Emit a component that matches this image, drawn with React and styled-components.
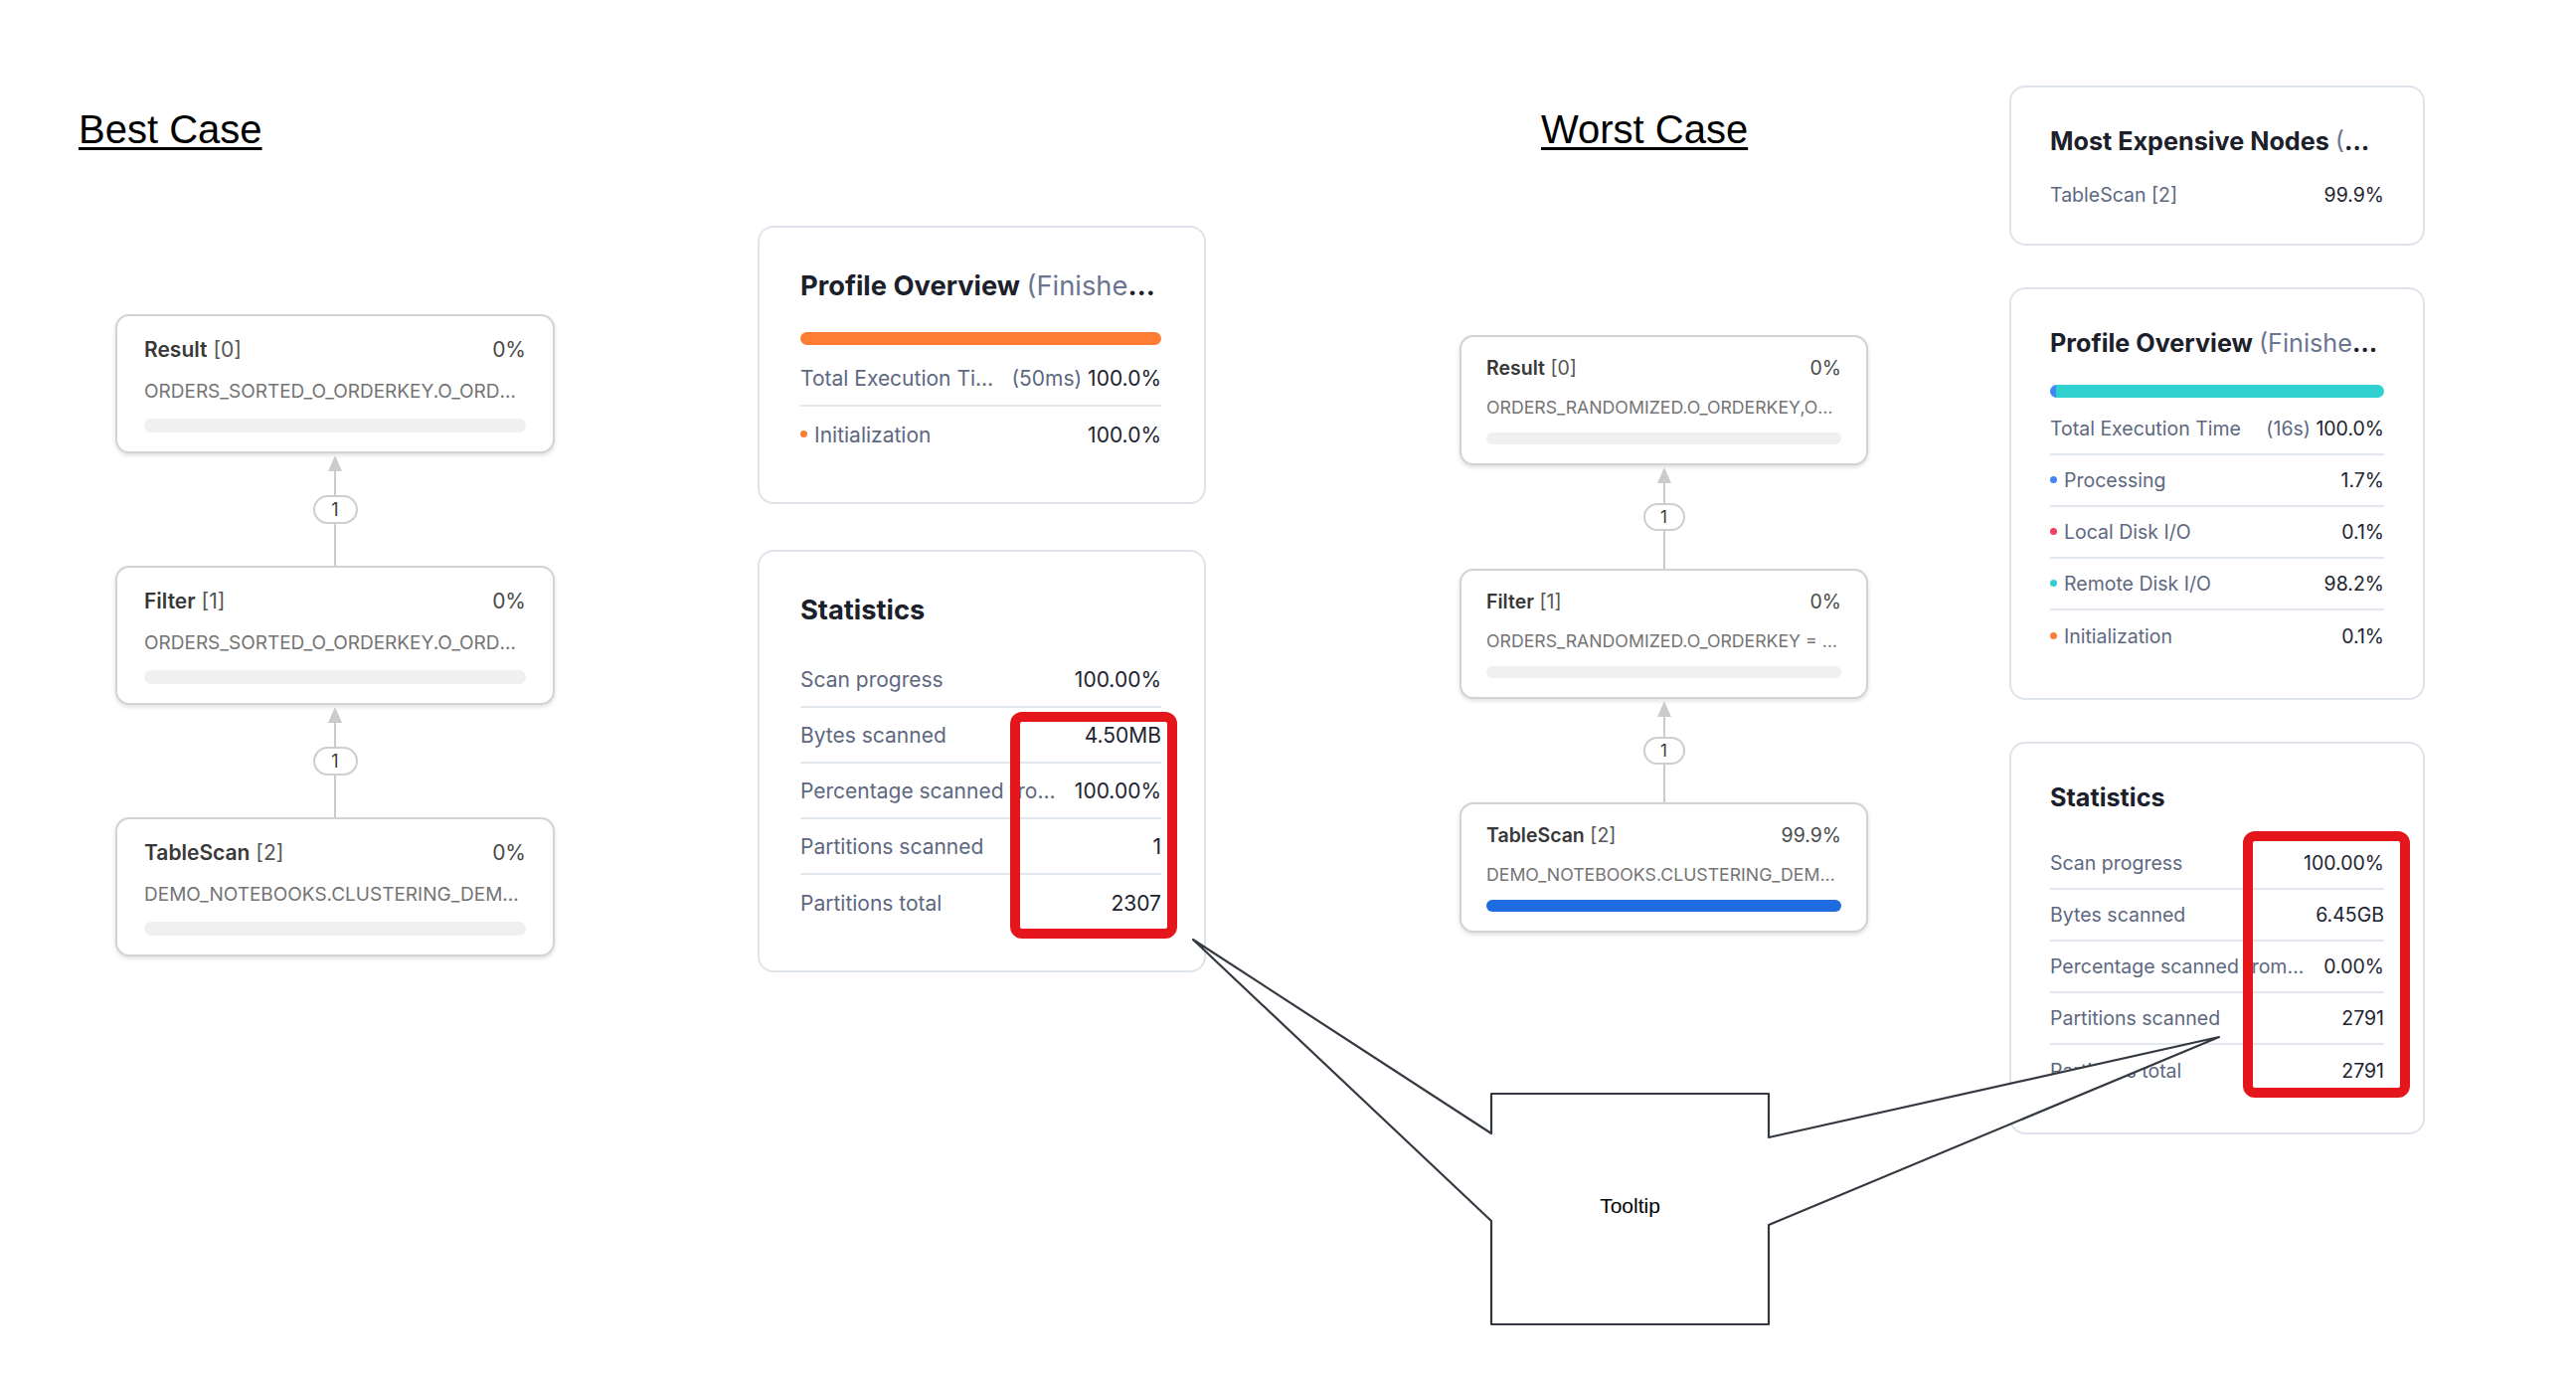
import React from 'react';
import styled, { createGlobalStyle } from 'styled-components';

const GlobalStyle = createGlobalStyle`
  html, body {
    margin: 0;
    padding: 0;
    background: #fff;
  }
  body {
    font-family: Inter, "Noto Sans", sans-serif;
  }
`;

const nodeSizes = {
  lg: { w: 442, padT: 18, padX: 27, padB: 19, head: 30, font: 21, sub: 19, subLine: 26, subGap: 15, bar: 14, barGap: 14, gap: 113, pillW: 45, pillH: 29, pillFont: 18 },
  sm: { w: 411, padT: 17, padX: 25, padB: 19, head: 28, font: 19.5, sub: 17.7, subLine: 24, subGap: 14, bar: 12, barGap: 13, gap: 104, pillW: 42, pillH: 28, pillFont: 17 },
};

const panelSizes = {
  lg: { w: 451, padT: 41, padL: 41, padR: 43, padB: 40, title: 27.3, titleLine: 36, row: 56, font: 21, barGap: 28, colGap: 46 },
  sm: { w: 418, padT: 37, padL: 39, padR: 39, padB: 36, title: 25.2, titleLine: 34, row: 52, font: 19.5, barGap: 25, colGap: 42 },
};

const Page = styled.div`
  position: relative;
  display: flex;
  align-items: flex-start;
  width: 2591px;
  height: 1392px;
  overflow: hidden;
  background: #fff;
`;

const DiagramColumn = styled.div`
  display: flex;
  flex-direction: column;
  flex-shrink: 0;
  margin-left: ${p => p.$offset}px;
  padding-top: 107px;
`;

const CaseTitle = styled.h1`
  margin: 0 0 0 ${p => p.$indent}px;
  font-family: "Liberation Sans", Arial, sans-serif;
  font-size: 40px;
  line-height: 46px;
  font-weight: 400;
  color: #000;
  text-decoration: underline;
  text-decoration-thickness: 3px;
  text-underline-offset: 4px;
`;

const Diagram = styled.div`
  display: flex;
  flex-direction: column;
  width: ${p => p.$s.w}px;
  margin-top: ${p => p.$top}px;
  margin-left: ${p => p.$indent}px;
`;

const NodeCard = styled.div`
  box-sizing: border-box;
  width: 100%;
  background: #fff;
  border: 2px solid #d3d3d3;
  border-radius: 14px;
  box-shadow: 0 2px 4px rgba(0, 0, 0, 0.13);
  padding: ${p => `${p.$s.padT}px ${p.$s.padX}px ${p.$s.padB}px`};
`;

const NodeHead = styled.div`
  display: flex;
  align-items: center;
  justify-content: space-between;
  height: ${p => p.$s.head}px;
  font-size: ${p => p.$s.font}px;
  color: #4a4a4a;
`;

const NodeName = styled.span`
  color: #555;
  b {
    font-weight: 600;
    color: #383838;
  }
`;

const NodeDetail = styled.div`
  margin-top: ${p => p.$s.subGap}px;
  font-size: ${p => p.$s.sub}px;
  line-height: ${p => p.$s.subLine}px;
  color: #747474;
  white-space: nowrap;
  overflow: hidden;
  text-overflow: ellipsis;
`;

const NodeBar = styled.div`
  margin-top: ${p => p.$s.barGap}px;
  height: ${p => p.$s.bar}px;
  border-radius: 8px;
  background: ${p => (p.$hot ? '#1f6be0' : '#f0f0f0')};
`;

const Connector = styled.div`
  position: relative;
  height: ${p => p.$s.gap}px;
  display: flex;
  align-items: center;
  justify-content: center;
  background: linear-gradient(#cbcbcb, #cbcbcb) center 16px / 2px calc(100% - 16px) no-repeat;

  &::before {
    content: '';
    position: absolute;
    top: 2px;
    left: 50%;
    transform: translateX(-50%);
    border-left: 7px solid transparent;
    border-right: 7px solid transparent;
    border-bottom: 16px solid #cbcbcb;
  }
`;

const EdgeLabel = styled.span`
  box-sizing: border-box;
  display: flex;
  align-items: center;
  justify-content: center;
  width: ${p => p.$s.pillW}px;
  height: ${p => p.$s.pillH}px;
  border: 2px solid #cecece;
  border-radius: 15px;
  background: #fff;
  font-size: ${p => p.$s.pillFont}px;
  color: #3a3a3a;
`;

const PanelColumn = styled.div`
  display: flex;
  flex-direction: column;
  flex-shrink: 0;
  width: ${p => p.$s.w}px;
  gap: ${p => p.$s.colGap}px;
  margin-left: ${p => p.$offset}px;
  padding-top: ${p => p.$top}px;
`;

const Panel = styled.section`
  position: relative;
  box-sizing: border-box;
  background: #fff;
  border: 2px solid #dfe3ea;
  border-radius: 16px;
  padding: ${p => `${p.$s.padT}px ${p.$s.padR}px ${p.$padB ?? p.$s.padB}px ${p.$s.padL}px`};
`;

const PanelTitle = styled.h2`
  margin: 0;
  font-size: ${p => p.$s.title}px;
  line-height: ${p => p.$s.titleLine}px;
  font-weight: 700;
  color: #1b202b;
  white-space: nowrap;
  overflow: hidden;
  text-overflow: ellipsis;

  span {
    font-weight: 400;
    color: #6b7590;
  }
`;

const TimeBar = styled.div`
  display: flex;
  margin-top: ${p => p.$s.barGap}px;
  height: 13px;
  border-radius: 7px;
  overflow: hidden;
`;

const TimeSegment = styled.div`
  flex-shrink: 0;
  background: ${p => p.$color};
`;

const RowList = styled.div`
  margin-top: ${p => p.$top}px;
`;

const StatRow = styled.div`
  display: flex;
  align-items: center;
  box-sizing: border-box;
  height: ${p => p.$s.row}px;
  font-size: ${p => p.$s.font}px;
  border-bottom: 2px solid #e3e7ee;

  &:last-child {
    border-bottom: none;
  }
`;

const Label = styled.span`
  flex: 1;
  min-width: 0;
  color: #5d6880;
  white-space: nowrap;
  overflow: hidden;
  text-overflow: ellipsis;
`;

const Dot = styled.i`
  display: inline-block;
  width: 7px;
  height: 7px;
  margin-right: 7px;
  border-radius: 50%;
  vertical-align: middle;
  position: relative;
  top: -2px;
  background: ${p => p.$color};
`;

const Value = styled.span`
  flex-shrink: 0;
  margin-left: 18px;
  color: #1d2330;
  white-space: nowrap;

  small {
    font-size: inherit;
    color: #5d6880;
  }
`;

const Highlight = styled.div`
  position: absolute;
  top: ${p => p.$top}px;
  right: ${p => p.$right}px;
  width: 168px;
  height: ${p => p.$h}px;
  box-sizing: border-box;
  border: 10px solid #e5161b;
  border-radius: 12px;
  pointer-events: none;
`;

const CalloutLayer = styled.svg`
  position: absolute;
  left: 0;
  top: 0;
  width: 2591px;
  height: 1392px;
  pointer-events: none;
`;

const TooltipLabel = styled.div`
  position: absolute;
  left: 1500px;
  top: 1100px;
  width: 279px;
  height: 226px;
  display: flex;
  align-items: center;
  justify-content: center;
  font-family: "Liberation Sans", Arial, sans-serif;
  font-size: 21px;
  color: #000;
`;

const colors = {
  processing: '#4285f4',
  local: '#f43f5e',
  remote: '#30d0d0',
  init: '#fd7d35',
};

const Node = ({ s, name, index, pct, detail, hot }) => (
  <NodeCard $s={s}>
    <NodeHead $s={s}>
      <NodeName><b>{name}</b> [{index}]</NodeName>
      <span>{pct}</span>
    </NodeHead>
    <NodeDetail $s={s}>{detail}</NodeDetail>
    <NodeBar $s={s} $hot={hot} />
  </NodeCard>
);

const PlanDiagram = ({ s, nodes, top, indent }) => (
  <Diagram $s={s} $top={top} $indent={indent}>
    {nodes.map((n, i) => (
      <React.Fragment key={n.name}>
        {i > 0 && (
          <Connector $s={s}>
            <EdgeLabel $s={s}>1</EdgeLabel>
          </Connector>
        )}
        <Node s={s} {...n} />
      </React.Fragment>
    ))}
  </Diagram>
);

const Rows = ({ s, rows, top }) => (
  <RowList $top={top}>
    {rows.map(r => (
      <StatRow $s={s} key={r.label}>
        <Label>
          {r.dot && <Dot $color={r.dot} />}
          {r.label}
        </Label>
        <Value>
          {r.extra && <small>{r.extra} </small>}
          {r.value}
        </Value>
      </StatRow>
    ))}
  </RowList>
);

const bestNodes = [
  { name: 'Result', index: 0, pct: '0%', detail: 'ORDERS_SORTED_O_ORDERKEY.O_ORDERKEY, ORDERS_SORTED_O_ORDERKEY.O_CUSTKEY' },
  { name: 'Filter', index: 1, pct: '0%', detail: 'ORDERS_SORTED_O_ORDERKEY.O_ORDERKEY = 4200000' },
  { name: 'TableScan', index: 2, pct: '0%', detail: 'DEMO_NOTEBOOKS.CLUSTERING_DEMO.ORDERS_SORTED_O_ORDERKEY' },
];

const worstNodes = [
  { name: 'Result', index: 0, pct: '0%', detail: 'ORDERS_RANDOMIZED.O_ORDERKEY,ORDERS_RANDOMIZED.O_CUSTKEY' },
  { name: 'Filter', index: 1, pct: '0%', detail: 'ORDERS_RANDOMIZED.O_ORDERKEY = 4200000' },
  { name: 'TableScan', index: 2, pct: '99.9%', detail: 'DEMO_NOTEBOOKS.CLUSTERING_DEMO.ORDERS_RANDOMIZED', hot: true },
];

const bestStats = [
  { label: 'Scan progress', value: '100.00%' },
  { label: 'Bytes scanned', value: '4.50MB' },
  { label: 'Percentage scanned from cache', value: '100.00%' },
  { label: 'Partitions scanned', value: '1' },
  { label: 'Partitions total', value: '2307' },
];

const worstStats = [
  { label: 'Scan progress', value: '100.00%' },
  { label: 'Bytes scanned', value: '6.45GB' },
  { label: 'Percentage scanned from cache', value: '0.00%' },
  { label: 'Partitions scanned', value: '2791' },
  { label: 'Partitions total', value: '2791' },
];

const worstTime = [
  { color: colors.processing, share: 1.7 },
  { color: colors.local, share: 0.1 },
  { color: colors.remote, share: 98.2 },
  { color: colors.init, share: 0.1 },
];

export default function App() {
  const lg = panelSizes.lg;
  const sm = panelSizes.sm;

  return (
    <Page>
      <GlobalStyle />

      <DiagramColumn $offset={79}>
        <CaseTitle $indent={0}>Best Case</CaseTitle>
        <PlanDiagram s={nodeSizes.lg} nodes={bestNodes} top={163} indent={37} />
      </DiagramColumn>

      <PanelColumn $s={lg} $offset={204} $top={227}>
        <Panel $s={lg}>
          <PanelTitle $s={lg}>Profile Overview <span>(Finished, 50ms)</span></PanelTitle>
          <TimeBar $s={lg}>
            <TimeSegment $color={colors.init} style={{ width: '100%' }} />
          </TimeBar>
          <Rows
            s={lg}
            top={6}
            rows={[
              { label: 'Total Execution Time', extra: '(50ms)', value: '100.0%' },
              { label: 'Initialization', dot: colors.init, value: '100.0%' },
            ]}
          />
        </Panel>
        <Panel $s={lg}>
          <PanelTitle $s={lg}>Statistics</PanelTitle>
          <Rows s={lg} top={24} rows={bestStats} />
          <Highlight $top={161} $right={27} $h={228} />
        </Panel>
      </PanelColumn>

      <DiagramColumn $offset={255}>
        <CaseTitle $indent={82}>Worst Case</CaseTitle>
        <PlanDiagram s={nodeSizes.sm} nodes={worstNodes} top={184} indent={0} />
      </DiagramColumn>

      <PanelColumn $s={sm} $offset={142} $top={86}>
        <Panel $s={sm} $padB={23}>
          <PanelTitle $s={sm}>Most Expensive Nodes <span>(Wall Time)</span></PanelTitle>
          <Rows s={sm} top={11} rows={[{ label: 'TableScan [2]', value: '99.9%' }]} />
        </Panel>
        <Panel $s={sm}>
          <PanelTitle $s={sm}>Profile Overview <span>(Finished, 16s)</span></PanelTitle>
          <TimeBar $s={sm}>
            {worstTime.map(t => (
              <TimeSegment key={t.color} $color={t.color} style={{ width: `${t.share}%` }} />
            ))}
          </TimeBar>
          <Rows
            s={sm}
            top={6}
            rows={[
              { label: 'Total Execution Time', extra: '(16s)', value: '100.0%' },
              { label: 'Processing', dot: colors.processing, value: '1.7%' },
              { label: 'Local Disk I/O', dot: colors.local, value: '0.1%' },
              { label: 'Remote Disk I/O', dot: colors.remote, value: '98.2%' },
              { label: 'Initialization', dot: colors.init, value: '0.1%' },
            ]}
          />
        </Panel>
        <Panel $s={sm}>
          <PanelTitle $s={sm}>Statistics</PanelTitle>
          <Rows s={sm} top={24} rows={worstStats} />
          <Highlight $top={88} $right={13} $h={268} />
        </Panel>
      </PanelColumn>

      <CalloutLayer viewBox="0 0 2591 1392">
        <path
          d="M1500 1100 L1779 1100 L1779 1144 L2232 1043 L1779 1232 L1779 1332 L1500 1332 L1500 1228 L1200 945 L1500 1140 Z"
          fill="#fff"
          stroke="#343941"
          strokeWidth="2.2"
          strokeLinejoin="round"
        />
      </CalloutLayer>
      <TooltipLabel>Tooltip</TooltipLabel>
    </Page>
  );
}
